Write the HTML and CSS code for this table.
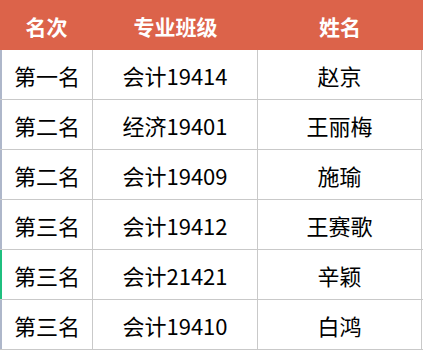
FILE: index.html
```html
<!DOCTYPE html>
<html lang="zh">
<head>
<meta charset="utf-8">
<link rel="stylesheet" href="styles.css">
</head>
<body>
<div class="table">
  <div class="row head">
    <div class="cell">名次</div>
    <div class="cell">专业班级</div>
    <div class="cell">姓名</div>
  </div>
  <div class="row">
    <div class="cell">第一名</div>
    <div class="cell">会计19414</div>
    <div class="cell">赵京</div>
  </div>
  <div class="row">
    <div class="cell">第二名</div>
    <div class="cell">经济19401</div>
    <div class="cell">王丽梅</div>
  </div>
  <div class="row">
    <div class="cell">第二名</div>
    <div class="cell">会计19409</div>
    <div class="cell">施瑜</div>
  </div>
  <div class="row">
    <div class="cell">第三名</div>
    <div class="cell">会计19412</div>
    <div class="cell">王赛歌</div>
  </div>
  <div class="row marked">
    <div class="cell">第三名</div>
    <div class="cell">会计21421</div>
    <div class="cell">辛颖</div>
  </div>
  <div class="row">
    <div class="cell">第三名</div>
    <div class="cell">会计19410</div>
    <div class="cell">白鸿</div>
  </div>
</div>
</body>
</html>
```

FILE: styles.css
```css
html, body {
  margin: 0;
  padding: 0;
  background: #ffffff;
}

body {
  font-family: "Noto Sans CJK SC", "Noto Sans", sans-serif;
  color: #000000;
}

.table {
  width: 423px;
  display: flex;
  flex-direction: column;
}

.row {
  display: grid;
  grid-template-columns: 93px 165px 164px;
  height: 50px;
  box-sizing: border-box;
  border-bottom: 1px solid #c9c9c9;
  font-size: 22px;
}

.cell {
  display: flex;
  align-items: center;
  justify-content: center;
  border-right: 1px solid #c9c9c9;
  box-sizing: border-box;
  padding-top: 1px;
}

.row .cell:first-child {
  border-left: 2px solid #aeb7ca;
}

.row.marked .cell:first-child {
  border-left-color: #1fbf7f;
}

.row.head {
  background: #dc634a;
  color: #ffffff;
  font-weight: 700;
  font-size: 21px;
  border-bottom: none;
}

.row.head .cell {
  border-right: none;
}

.row.head .cell:first-child {
  border-left: none;
}
```
